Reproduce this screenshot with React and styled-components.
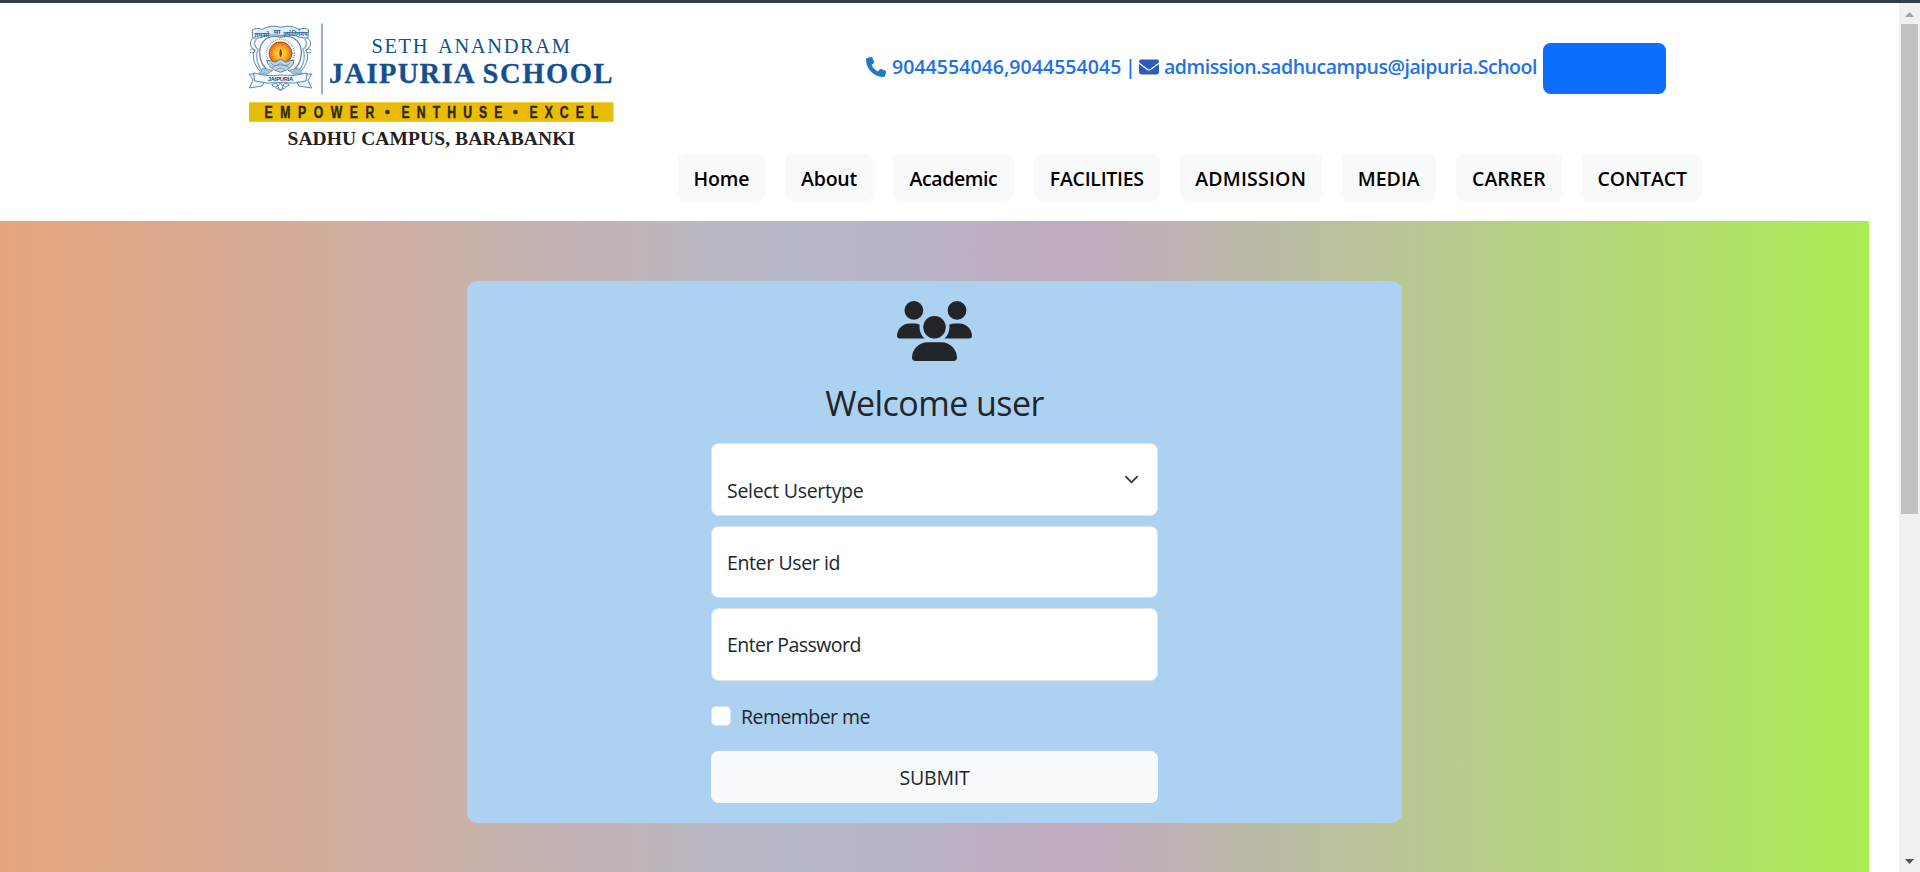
import React from 'react';
import styled, { createGlobalStyle } from 'styled-components';
import { FaPhone, FaEnvelope, FaUsers } from 'react-icons/fa6';

const GlobalStyle = createGlobalStyle`
  *, *::before, *::after { box-sizing: border-box; }
  body {
    margin: 0;
    background: #fff;
    color: #212529;
    font-family: "Open Sans", "Noto Sans", sans-serif;
    font-size: 19.5px;
    line-height: 1.5;
    overflow: hidden;
  }
`;

const Window = styled.div`
  display: flex;
  flex-direction: column;
  height: 872px;
  border-top: 3px solid #353c4c;
`;

const Viewport = styled.div`
  display: flex;
  flex: 1;
  min-height: 0;
`;

const Page = styled.div`
  flex: 1;
  display: flex;
  flex-direction: column;
  min-width: 0;
`;

const Header = styled.header`
  display: flex;
  height: 218px;
  padding-left: 240px;
`;

const HeaderContent = styled.div`
  display: flex;
  flex-direction: column;
  padding: 40px 0 0 58px;
`;

const ContactBar = styled.div`
  display: flex;
  align-items: center;
  height: 51px;
  margin-left: 188px;
  color: #2371e3;
  font-weight: 600;
  white-space: nowrap;
`;

const ContactIcon = styled.span`
  display: flex;
  width: 20px;
  margin: 0 ${p => p.$gap}px 4px 0;
  color: ${p => p.$color};
  font-size: 20px;
`;

const ContactText = styled.span`
  width: ${p => p.$width}px;
  padding-bottom: 4px;
  letter-spacing: ${p => p.$spacing || 0}px;
`;

const PrimaryButton = styled.button`
  width: 123px;
  height: 51px;
  border: 0;
  border-radius: 7.5px;
  background: #0d6efd;
`;

const Nav = styled.nav`
  display: flex;
  gap: 20.1px;
  margin-top: 60px;
`;

const NavButton = styled.button`
  width: ${p => p.$width}px;
  height: 47px;
  padding: 1px 0 0;
  border: 0;
  border-radius: 7.5px;
  background: #f8f9fa;
  color: #000;
  font: 600 19.5px "Open Sans", "Noto Sans", sans-serif;
  letter-spacing: ${p => p.$spacing}px;
  white-space: nowrap;
`;

const Hero = styled.main`
  flex: 1;
  width: 1869px;
  padding-top: 60px;
  background: linear-gradient(90deg, #e6a57c 0%, #b6b9ca 42.5%, #c1abc0 57.8%, #aced55 100%);
`;

const Card = styled.form`
  display: flex;
  flex-direction: column;
  align-items: center;
  width: 935px;
  height: 542px;
  margin: 0 auto;
  padding: 19.5px 0 0;
  border-radius: 10px;
  background: #add1f1;
`;

const UsersIcon = styled(FaUsers)`
  display: block;
  width: 75px;
  height: 60px;
`;

const Title = styled.h3`
  margin: 21.5px 0 19px;
  height: 42px;
  font-size: 34px;
  font-weight: 400;
  line-height: 43px;
  letter-spacing: -0.55px;
`;

const Fields = styled.div`
  display: flex;
  flex-direction: column;
  gap: 10px;
  width: 447px;
`;

const Field = styled.div`
  display: flex;
  align-items: center;
  justify-content: space-between;
  height: 72.5px;
  padding: 0 18px 0 15px;
  border: 1.25px solid #dee2e6;
  border-radius: 7.5px;
  background: #fff;
`;

const FieldLabel = styled.span`
  padding-top: ${p => p.$top || 0}px;
  letter-spacing: ${p => p.$spacing}px;
`;

const Remember = styled.label`
  display: flex;
  align-items: center;
  gap: 10px;
  width: 447px;
  height: 30px;
  margin-top: 20.5px;
  letter-spacing: -0.55px;
`;

const RememberText = styled.span`
  padding-top: 2px;
`;

const Checkbox = styled.span`
  width: 20px;
  height: 20px;
  border: 1.25px solid #dee2e6;
  border-radius: 5px;
  background: #fff;
`;

const SubmitButton = styled.button`
  width: 447px;
  height: 52px;
  margin-top: 20px;
  padding: 1px 0 0;
  border: 0;
  border-radius: 7.5px;
  background: #f8f9fa;
  color: #212529;
  font: 400 19.5px "Open Sans", "Noto Sans", sans-serif;
  letter-spacing: -0.2px;
`;

const Scrollbar = styled.aside`
  display: flex;
  flex-direction: column;
  align-items: center;
  justify-content: space-between;
  width: 21px;
  padding: 9px 0 8px;
  background: #f0f0f0;
`;

const Thumb = styled.div`
  width: 17px;
  height: 490px;
  margin: 7px 0 auto;
  background: #c1c1c1;
`;

const Arrow = styled.svg`
  display: block;
  width: 9px;
  height: 5px;
  fill: ${p => p.$color};
`;

function Crest() {
  return (
    <g fill="none" stroke="#4a7ba8" strokeWidth="0.900" strokeLinejoin="round" strokeLinecap="round">
      <g transform="translate(0 2.300)">
        {/* motto ribbon */}
        <path d="M12.5 27.5 Q16 25 22 27 Q31 22 41 25 Q50 22 59 27 Q65 25 68.500 27.500 L68 35.500 Q64 36.500 60 35 Q51 31 41 33.500 Q31 31 22 35 Q17 36.500 13 35.500 Z" fill="#e5edf4" />
        <g fill="#2b639a" stroke="none" fontFamily='"Noto Sans", "Liberation Sans", sans-serif' fontSize="6.500" fontWeight="700">
          <text x="14.500" y="34.300" textLength="15" lengthAdjust="spacingAndGlyphs">तमसो</text>
          <text x="33.500" y="32" textLength="7" lengthAdjust="spacingAndGlyphs">मा</text>
          <text x="43.500" y="33.800" textLength="24" lengthAdjust="spacingAndGlyphs">ज्योतिर्गमय</text>
        </g>
        {/* scrolled shield */}
        <path d="M13 36 C8 40 11 46 15 48 C12 53 13 61 20 69 M68 36 C73 40 70 46 66 48 C69 53 68 61 61 69" />
        <path d="M16 37 C13 42 15 45 18 47 C15 55 17 62 23 70 M65 37 C68 42 66 45 63 47 C66 55 64 62 58 70" stroke="#8fb0cc" strokeWidth="1.500" />
        <path d="M10 48 Q13 45 15 48 Q14 52 10 50 M71 48 Q68 45 66 48 Q67 52 71 50" />
        <path d="M40.500 35 C25 31 18 43 20 54 C21 61 25 66 29 69 M40.500 35 C56 31 63 43 61 54 C60 61 56 66 52 69" stroke="#5a88b0" strokeWidth="1.300" />
        {/* rising sun and flame */}
        <circle cx="40.500" cy="51" r="14" stroke="#496f91" strokeWidth="1.400" strokeDasharray="0.600 1.400" strokeLinecap="butt" />
        <circle cx="40.500" cy="51" r="11.500" fill="url(#sun)" stroke="#8f4b20" strokeWidth="0.700" />
        <path d="M40.500 46.500 C42.600 50 42.200 52.500 40.500 55 C38.800 52.500 39 50 40.500 46.500Z" fill="#a3200f" stroke="none" />
        {/* lamp and lotus */}
        <path d="M27 58 Q32 58 35 60 L40.500 57 L46 60 Q49 58 54 58 Q54 66 40.500 70 Q27 66 27 58Z" fill="#c3d6e5" />
        <path d="M31 61 Q36 66 40.500 60.500 Q45 66 50 61 M32 65 Q40.500 60 49 65 M36 68 Q40.500 63 45 68" strokeWidth="0.700" />
        <path d="M23 66 L33 68 L27 72 L19 71Z M58 66 L48 68 L54 72 L62 71Z" fill="#a5c1d8" strokeWidth="0.600" />
      </g>
      {/* name ribbon */}
      <path d="M16 74 L9 74 L13 80 L9.500 88 L22 86 L25 81 M65 74 L72 74 L68 80 L71.500 88 L59 86 L56 81" fill="#eef4f8" />
      <path d="M14 73 Q27 77 40.500 75 Q54 77 67 73 L66 81 Q54 84.500 40.500 82.500 Q27 84.500 15 81Z" fill="#f4f8fb" />
      <text x="27.800" y="81" fill="#174b7c" stroke="none" fontFamily='"Liberation Sans", sans-serif' fontSize="5.800" fontWeight="700" textLength="25.500">JAIPURIA</text>
      <path d="M32 85 Q35 82 38 85 Q36 89 32 85 M49 85 Q46 82 43 85 Q45 89 49 85 M40.500 83 L43 87 L40.500 91 L38 87Z M36 88 L40.500 90 L45 88" />
    </g>
  );
}

function Logo() {
  return (
    <svg width="380" height="157" viewBox="0 3 380 157" role="img" aria-label="Seth Anandram Jaipuria School">
      <defs>
        <radialGradient id="sun">
          <stop offset="0" stopColor="#ffe63c" />
          <stop offset="0.5" stopColor="#fbb827" />
          <stop offset="1" stopColor="#e35f1c" />
        </radialGradient>
      </defs>
      <Crest />
      <path d="M82 23.500V94.500" stroke="#5f88ad" strokeWidth="1.300" />
      <g fontFamily='"Liberation Serif", serif' fill="#14508f">
        <text x="131.500" y="52.700" fontSize="20.500" textLength="56">SETH</text>
        <text x="198" y="52.700" fontSize="20.500" textLength="132">ANANDRAM</text>
        <g stroke="#14508f" strokeWidth="0.300" fontSize="28.500" fontWeight="700">
          <text x="89" y="82.500" textLength="145.500">JAIPURIA</text>
          <text x="242.500" y="82.500" textLength="130">SCHOOL</text>
        </g>
      </g>
      <rect x="9" y="102.300" width="364.500" height="19.500" fill="#e9bc06" />
      <g fontFamily='"Liberation Sans", sans-serif' fontSize="16.500" fontWeight="700" fill="#33270c" stroke="#33270c" strokeWidth="0.450">
        <text transform="translate(24.500 118) scale(.74 1)" textLength="148.500">EMPOWER</text>
        <text transform="translate(161.500 118) scale(.74 1)" textLength="136.500">ENTHUSE</text>
        <text transform="translate(289.500 118) scale(.74 1)" textLength="93">EXCEL</text>
        <circle cx="147.500" cy="112" r="2.100" />
        <circle cx="275.500" cy="112" r="2.100" />
      </g>
      <text x="47.500" y="145.300" fontFamily='"Liberation Serif", serif' fontSize="19.500" fontWeight="700" fill="#242122" textLength="287.500">SADHU CAMPUS, BARABANKI</text>
    </svg>
  );
}

const navItems = [
  { label: 'Home', width: 87, spacing: -0.15 },
  { label: 'About', width: 87.8, spacing: -0.25 },
  { label: 'Academic', width: 121, spacing: -0.4 },
  { label: 'FACILITIES', width: 125.5, spacing: -0.27 },
  { label: 'ADMISSION', width: 142, spacing: 0.2 },
  { label: 'MEDIA', width: 94, spacing: 0 },
  { label: 'CARRER', width: 106, spacing: 0 },
  { label: 'CONTACT', width: 120.5, spacing: -0.15 },
];

export default function App() {
  return (
    <Window>
      <GlobalStyle />
      <Viewport>
        <Page>
          <Header>
            <Logo />
            <HeaderContent>
              <ContactBar>
                <ContactIcon $color="#1f7bc1" $gap={6}><FaPhone /></ContactIcon>
                <ContactText $width={233} $spacing={0.05}>9044554046,9044554045</ContactText>
                <ContactText $width={14}>|</ContactText>
                <ContactIcon $color="#2c5bb8" $gap={5}><FaEnvelope /></ContactIcon>
                <ContactText $width={379} $spacing={-0.45}>admission.sadhucampus@jaipuria.School</ContactText>
                <PrimaryButton type="button" aria-label="Open" />
              </ContactBar>
              <Nav>
                {navItems.map(item => (
                  <NavButton key={item.label} type="button" $width={item.width} $spacing={item.spacing}>
                    {item.label}
                  </NavButton>
                ))}
              </Nav>
            </HeaderContent>
          </Header>
          <Hero>
            <Card>
              <UsersIcon />
              <Title>Welcome user</Title>
              <Fields>
                <Field>
                  <FieldLabel $top={22} $spacing={-0.3}>Select Usertype</FieldLabel>
                  <svg width="15" height="15" viewBox="0 0 16 16" fill="none" stroke="#343a40" strokeWidth="2" strokeLinecap="round" strokeLinejoin="round">
                    <path d="m2 5 6 6 6-6" />
                  </svg>
                </Field>
                <Field><FieldLabel $top={1.5} $spacing={-0.38}>Enter User id</FieldLabel></Field>
                <Field><FieldLabel $spacing={-0.56}>Enter Password</FieldLabel></Field>
              </Fields>
              <Remember><Checkbox /><RememberText>Remember me</RememberText></Remember>
              <SubmitButton type="button">SUBMIT</SubmitButton>
            </Card>
          </Hero>
        </Page>
        <Scrollbar>
          <Arrow viewBox="0 0 9 5" $color="#a3a3a3"><path d="M0 5 4.500 0 9 5Z" /></Arrow>
          <Thumb />
          <Arrow viewBox="0 0 9 5" $color="#505050"><path d="M0 0 4.500 5 9 0Z" /></Arrow>
        </Scrollbar>
      </Viewport>
    </Window>
  );
}
